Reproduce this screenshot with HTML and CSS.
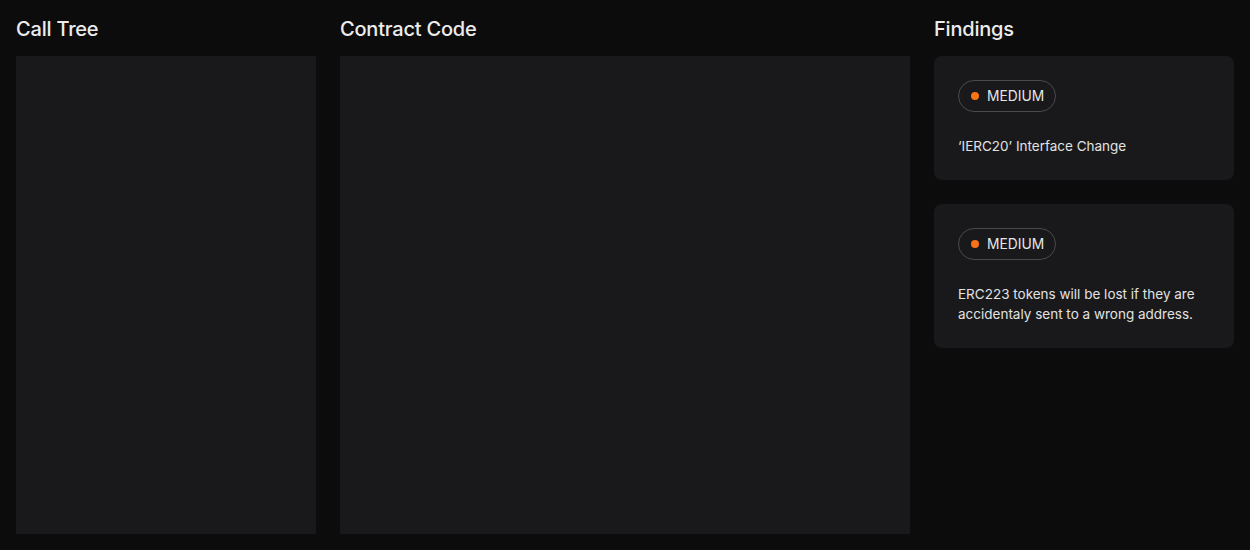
FILE: index.html
```html
<!DOCTYPE html>
<html>
<head>
<meta charset="utf-8">
<link rel="stylesheet" href="styles.css">
</head>
<body>
<div class="layout">
  <section class="col col-tree">
    <h2 class="title">Call Tree</h2>
    <div class="panel"></div>
  </section>
  <section class="col col-code">
    <h2 class="title">Contract Code</h2>
    <div class="panel"></div>
  </section>
  <section class="col col-findings">
    <h2 class="title">Findings</h2>
    <div class="findings">
      <div class="card">
        <span class="badge"><span class="dot"></span>MEDIUM</span>
        <p class="desc">‘IERC20’ Interface Change</p>
      </div>
      <div class="card">
        <span class="badge"><span class="dot"></span>MEDIUM</span>
        <p class="desc">ERC223 tokens will be lost if they are accidentaly sent to a wrong address.</p>
      </div>
    </div>
  </section>
</div>
</body>
</html>
```
FILE: styles.css
```css
* { box-sizing: border-box; }
html, body { margin: 0; height: 100%; }
body {
  background: #0c0c0c;
  color: #e6e6e6;
  font-family: Inter, "Noto Sans", sans-serif;
}
.layout {
  display: flex;
  gap: 24px;
  padding: 16px;
  height: 550px;
}
.col {
  display: flex;
  flex-direction: column;
  gap: 14px;
}
.col-tree, .col-findings { width: 300px; }
.col-code { width: 570px; }
.title {
  margin: 0;
  font-size: 20px;
  font-weight: 500;
  line-height: 26px;
  letter-spacing: -0.2px;
  color: #ececec;
}
.panel {
  flex: 1;
  background: #19191b;
}
.findings {
  display: flex;
  flex-direction: column;
  gap: 24px;
}
.card {
  background: #19191b;
  border-radius: 8px;
  padding: 24px;
  display: flex;
  flex-direction: column;
  align-items: flex-start;
  gap: 24px;
}
.badge {
  display: inline-flex;
  align-items: center;
  gap: 8px;
  height: 32px;
  padding: 0 11px 0 12px;
  border: 1px solid #4a4a4c;
  border-radius: 16px;
  font-size: 13.8px;
  color: #e6e6e6;
}
.dot {
  width: 8px;
  height: 8px;
  border-radius: 50%;
  background: #f97316;
}
.desc {
  margin: 0;
  font-size: 13.5px;
  line-height: 20px;
  color: #e2e2e2;
}
```
